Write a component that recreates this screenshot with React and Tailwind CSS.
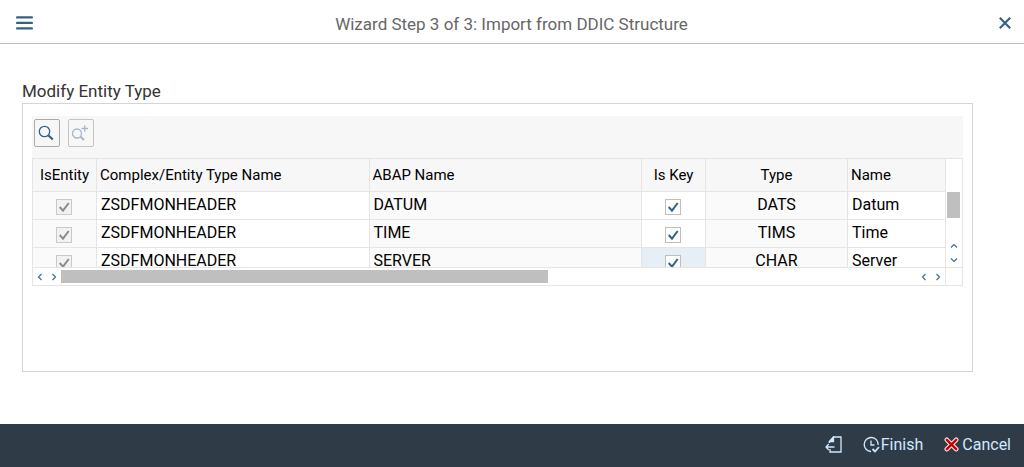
import { useState } from "react";

const initialRows = [
  { id: 1, typeName: "ZSDFMONHEADER", abapName: "DATUM", isKey: true, type: "DATS", name: "Datum" },
  { id: 2, typeName: "ZSDFMONHEADER", abapName: "TIME", isKey: true, type: "TIMS", name: "Time" },
  { id: 3, typeName: "ZSDFMONHEADER", abapName: "SERVER", isKey: true, type: "CHAR", name: "Server" },
];

const Arrow = ({ d, label }) => (
  <button type="button" aria-label={label} className="flex size-3.5 items-center justify-center">
    <svg viewBox="0 0 8 8" className="size-2" fill="none" stroke="#3f6f98" strokeWidth="1.2">
      <path d={d} />
    </svg>
  </button>
);

const CheckBox = ({ label, checked, disabled, onChange }) => (
  <label className="mx-auto grid size-4">
    <input
      type="checkbox"
      aria-label={label}
      checked={checked}
      disabled={disabled}
      onChange={onChange}
      className="peer col-start-1 row-start-1 size-4 appearance-none border border-[#bfbfbf] bg-white disabled:border-[#cdc8c8] disabled:bg-[#f2f2f2]"
    />
    <svg
      viewBox="0 0 16 16"
      className="pointer-events-none invisible col-start-1 row-start-1 size-4 text-[#346187] peer-checked:visible peer-disabled:text-[#8c8c8c]"
      fill="none"
      stroke="currentColor"
      strokeWidth="2"
    >
      <path d="M3.7 8L7 11.7L12.7 4" />
    </svg>
  </label>
);

const Header = () => (
  <header className="flex h-11 items-center border-b border-[#bfbfbf] pr-3 pl-4">
    <button type="button" aria-label="Menu" className="pt-0.5">
      <svg viewBox="0 0 17 14" className="h-3.5 w-[17px]" stroke="#346187" strokeWidth="2.4" strokeLinecap="round">
        <path d="M1.2 1.4H15.8M1.2 6.9H15.8M1.2 12.4H15.8" />
      </svg>
    </button>
    <h1 className="grow pt-1 pr-2 text-center text-[17px] leading-6 text-[#666666]">
      Wizard Step 3 of 3: Import from DDIC Structure
    </h1>
    <button type="button" aria-label="Close" className="pt-0.5">
      <svg viewBox="0 0 14 14" className="size-3.5" stroke="#346187" strokeWidth="2.2">
        <path d="M1.8 1.8L12.2 12.2M12.2 1.8L1.8 12.2" />
      </svg>
    </button>
  </header>
);

const Toolbar = () => (
  <div className="flex h-[42px] gap-2 bg-[#f7f7f7] pt-[3px] pl-0.5">
    <button
      type="button"
      aria-label="Details"
      className="flex h-7 w-[26px] items-center justify-center rounded-xs border border-[#ababab] pr-0.5"
    >
      <svg viewBox="0 0 16 16" className="size-4" fill="none" stroke="#346187">
        <circle cx="6.5" cy="6.5" r="5.2" strokeWidth="1.3" />
        <path d="M10.5 10.5L14.8 14.5" strokeWidth="2.2" />
      </svg>
    </button>
    <button
      type="button"
      aria-label="Search next"
      disabled
      className="flex h-7 w-[26px] items-center justify-center rounded-xs border border-[#c4c4c4] pr-0.5"
    >
      <svg viewBox="0 0 18 18" className="size-[18px]" fill="none" stroke="#a5b8c9">
        <circle cx="6" cy="9.5" r="4.5" strokeWidth="1.3" />
        <path d="M9.5 12.5L13 16" strokeWidth="2" />
        <path d="M10.5 4.5H17M13.7 1.2V7.8" strokeWidth="1.3" />
      </svg>
    </button>
  </div>
);

const th = "border-r border-b border-[#e5e5e5] bg-[#f7f7f7] px-[3px] pt-px text-[15px] font-normal";
const td = "border-r border-b border-[#e5e5e5] px-1 pt-1 pb-0 align-top leading-[18px]";
const checkTd = "border-r border-b border-[#e5e5e5] pt-[7px] pr-0.5 pb-0 pl-0 align-top";

const App = () => {
  const [rows, setRows] = useState(initialRows);

  const toggleKey = (id) => {
    setRows(rows.map((row) => (row.id === id ? { ...row, isKey: !row.isKey } : row)));
  };

  return (
    <div className="flex min-h-screen flex-col bg-white font-['Roboto','Liberation_Sans',sans-serif] text-base text-black">
      <Header />

      <main className="grow pt-[35px] pr-[51px] pb-[52px] pl-[22px]">
        <h2 className="text-[17px] leading-6 text-[#333333]">Modify Entity Type</h2>
        <section className="min-h-[269px] border border-[#d4d4d4] px-[9px] pt-3">
          <Toolbar />

          <div className="flex border-x border-t border-[#e5e5e5]">
            <div className="h-[109px] grow overflow-hidden border-b border-[#e5e5e5]">
              <table className="w-full table-fixed border-separate border-spacing-0">
                <colgroup>
                  <col className="w-16" />
                  <col />
                  <col />
                  <col className="w-16" />
                  <col className="w-[142px]" />
                  <col className="w-[98px]" />
                </colgroup>
                <thead>
                  <tr className="h-[33px] whitespace-nowrap">
                    <th className={`${th} text-center`}>IsEntity</th>
                    <th className={`${th} text-left`}>Complex/Entity Type Name</th>
                    <th className={`${th} text-left`}>ABAP Name</th>
                    <th className={`${th} text-center`}>Is Key</th>
                    <th className={`${th} text-center`}>Type</th>
                    <th className={`${th} text-left`}>Name</th>
                  </tr>
                </thead>
                <tbody>
                  {rows.map((row) => (
                    <tr key={row.id} className="group h-7">
                      <td className={`${checkTd} bg-[#fafafa]`}>
                        <CheckBox label={`IsEntity ${row.abapName}`} checked disabled />
                      </td>
                      <td className={td}>{row.typeName}</td>
                      <td className={`${td} bg-[#fafafa]`}>{row.abapName}</td>
                      <td className={`${checkTd} group-last:bg-[#e6eef6]`}>
                        <CheckBox
                          label={`Is Key ${row.abapName}`}
                          checked={row.isKey}
                          onChange={() => toggleKey(row.id)}
                        />
                      </td>
                      <td className={`${td} bg-[#fafafa] text-center`}>{row.type}</td>
                      <td className={td}>{row.name}</td>
                    </tr>
                  ))}
                </tbody>
              </table>
            </div>
            <div className="flex w-4 shrink-0 flex-col items-center border-b border-[#e5e5e5]">
              <div className="mt-[33px] mr-0.5 mb-auto h-[26px] w-[13px] bg-[#bfbfbf]"></div>
              <Arrow label="Scroll up" d="M1 5.5L4 2.5L7 5.5" />
              <Arrow label="Scroll down" d="M1 2.5L4 5.5L7 2.5" />
            </div>
          </div>
          <div className="flex h-[18px] border-x border-b border-[#e5e5e5]">
            <div className="flex grow items-center border-r border-[#e5e5e5]">
              <Arrow label="Scroll left" d="M5.5 1L2.5 4L5.5 7" />
              <Arrow label="Scroll right" d="M2.5 1L5.5 4L2.5 7" />
              <div className="mr-auto h-[13px] w-[487px] bg-[#bfbfbf]"></div>
              <Arrow label="Scroll left" d="M5.5 1L2.5 4L5.5 7" />
              <Arrow label="Scroll right" d="M2.5 1L5.5 4L2.5 7" />
            </div>
            <div className="w-4"></div>
          </div>
        </section>
      </main>

      <footer className="flex h-[43px] items-center justify-end gap-[21px] bg-[#2f3c48] pr-[13px] pb-0.5 text-[#d1e8ff]">
        <button type="button" aria-label="Exit">
          <svg viewBox="0 0 17 17" className="size-[17px]" fill="none" stroke="currentColor" strokeWidth="1.3">
            <path d="M4.5 7V5.5L8.5 1H16V16H5V13" />
            <path d="M4.5 5.5H8.5V1Z" fill="currentColor" />
            <path d="M9.5 11H1M3.8 8L1 11L3.8 14" />
          </svg>
        </button>
        <button type="button" className="flex items-center gap-px">
          <svg viewBox="0 0 17 17" className="size-[17px]" fill="none" stroke="currentColor" strokeWidth="1.3">
            <path d="M8 15.5A7 7 0 1 1 15.2 9" />
            <path d="M8 4.5V9H11.5" />
            <path d="M9.5 13L12 15.5L16 11" strokeWidth="1.8" />
          </svg>
          Finish
        </button>
        <button type="button" className="flex items-center gap-[3px]">
          <svg viewBox="0 0 15 15" className="size-[15px]" fill="none" strokeLinecap="round">
            <path d="M2.8 2.8L12.2 12.2M12.2 2.8L2.8 12.2" stroke="#f3e6e6" strokeWidth="4.6" />
            <path d="M2.8 2.8L12.2 12.2M12.2 2.8L2.8 12.2" stroke="#cc0000" strokeWidth="2.4" />
          </svg>
          Cancel
        </button>
      </footer>
    </div>
  );
};

export default App;
